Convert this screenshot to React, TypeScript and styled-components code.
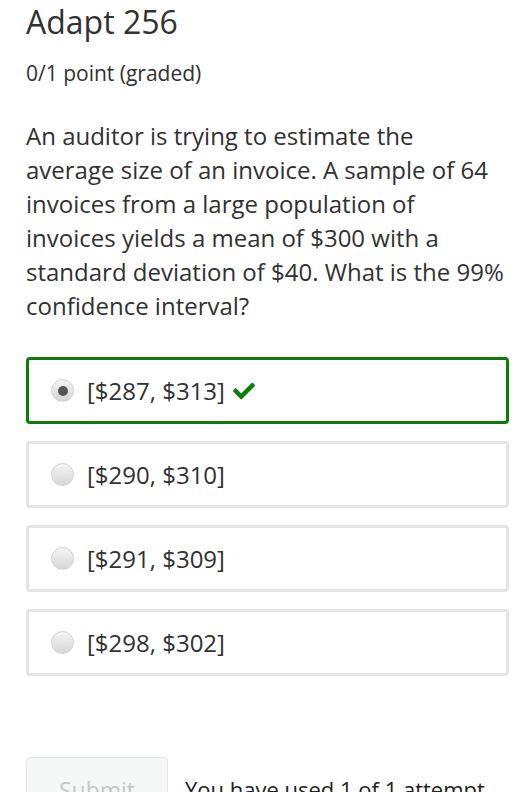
import { createGlobalStyle } from 'styled-components';
import styled from 'styled-components';
import { FaCheck } from 'react-icons/fa';

const GlobalStyle = createGlobalStyle`
  body {
    margin: 0;
    background: #fff;
    font-family: "Open Sans", "Noto Sans", sans-serif;
    color: #313131;
  }
`;

const Page = styled.div`
  padding: 0 20px 0 26px;
`;

const Title = styled.h2`
  margin: 0;
  font-size: 32px;
  font-weight: 400;
  line-height: 44px;
`;

const Points = styled.div`
  margin-top: 15px;
  font-size: 21px;
  line-height: 28px;
`;

const Question = styled.p`
  margin: 32px 0 0;
  max-width: 482px;
  font-size: 24px;
  line-height: 34px;
`;

const Options = styled.div`
  margin-top: 34px;
  display: flex;
  flex-direction: column;
  gap: 17px;
`;

const Option = styled.label<{ $correct?: boolean }>`
  box-sizing: border-box;
  height: 67px;
  display: flex;
  align-items: center;
  padding-left: 22px;
  border: ${(p) => (p.$correct ? '3px solid #0b7d0b' : '3px solid #e4e4e4')};
  border-radius: 4px;
  font-size: 24px;
`;

const Radio = styled.span<{ $checked?: boolean }>`
  box-sizing: border-box;
  width: 23px;
  height: 23px;
  border-radius: 50%;
  border: 1px solid #d2d2d2;
  background: linear-gradient(#f4f4f4, #d6d6d6);
  display: flex;
  align-items: center;
  justify-content: center;
  margin-right: 13px;

  &::after {
    content: '';
    display: ${(p) => (p.$checked ? 'block' : 'none')};
    width: 10px;
    height: 10px;
    border-radius: 50%;
    background: #555;
  }
`;

const Check = styled(FaCheck)`
  color: #0b7d0b;
  width: 26px;
  height: 22px;
  margin-left: 6px;
`;

const Actions = styled.div`
  margin-top: 81px;
  display: flex;
  align-items: flex-start;
  gap: 17px;
`;

const Submit = styled.button`
  box-sizing: border-box;
  width: 142px;
  height: 58px;
  border: 1px solid #e6e6e6;
  border-radius: 4px;
  background: #f6f7f7;
  color: #c6c6c6;
  font-family: inherit;
  font-size: 23px;
  padding-top: 8px;
`;

const Attempts = styled.span`
  font-size: 22px;
  line-height: 30px;
  padding-top: 17px;
  color: #222;
`;

const answers = [
  { text: '[$287, $313]', checked: true },
  { text: '[$290, $310]' },
  { text: '[$291, $309]' },
  { text: '[$298, $302]' },
];

export default function App() {
  return (
    <Page>
      <GlobalStyle />
      <Title>Adapt 256</Title>
      <Points>0/1 point (graded)</Points>
      <Question>
        An auditor is trying to estimate the average size of an invoice. A sample of 64
        invoices from a large population of invoices yields a mean of $300 with a standard
        deviation of $40. What is the 99% confidence interval?
      </Question>
      <Options>
        {answers.map((a) => (
          <Option key={a.text} $correct={a.checked}>
            <Radio $checked={a.checked} />
            {a.text}
            {a.checked && <Check />}
          </Option>
        ))}
      </Options>
      <Actions>
        <Submit disabled>Submit</Submit>
        <Attempts>You have used 1 of 1 attempt</Attempts>
      </Actions>
    </Page>
  );
}
